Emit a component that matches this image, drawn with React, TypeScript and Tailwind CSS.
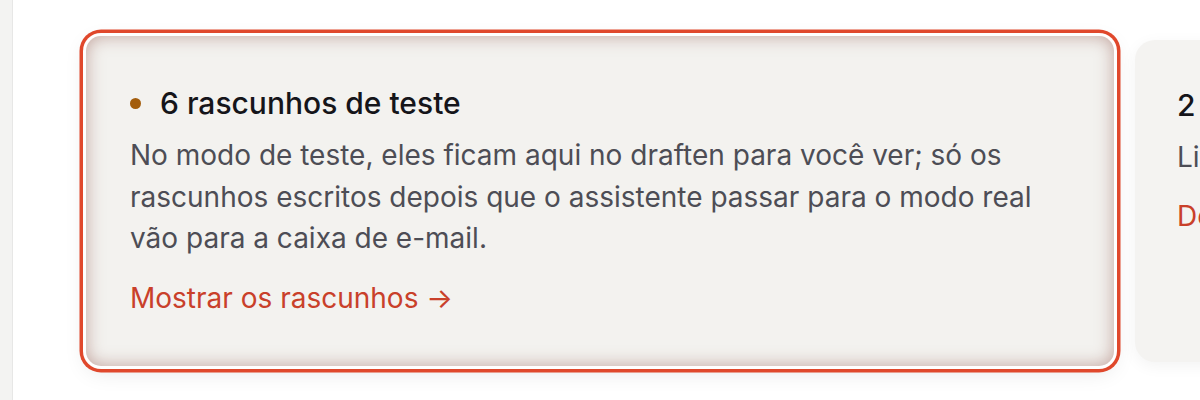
import React from "react";

export default function App() {
  return (
    <div className="flex h-[400px] w-[1200px] overflow-hidden bg-white" style={{ fontFamily: "Inter, 'Noto Sans', sans-serif" }}>
      <aside className="h-full w-[13px] shrink-0 border-r border-[#e7e7e6] bg-[#f3f3f2]" />
      <main className="flex flex-1 items-start gap-[21px] overflow-hidden pl-[73px] pt-[36px]">
        <section className="h-[330px] w-[1028px] shrink-0 rounded-[15px] bg-[#f3f2ef] pl-[44px] pr-[40px] pt-[49px] ring-[3.5px] ring-[#e0482c] ring-offset-[3px] ring-offset-white shadow-[0_6px_22px_rgba(0,0,0,0.10)] inset-shadow-[0_0_17px_rgba(145,85,75,0.5)]">
          <div className="flex items-center gap-[19px]">
            <span className="h-[11px] w-[11px] shrink-0 rounded-full bg-[#a35d0c]" />
            <h2 className="text-[30px] font-medium leading-[36px] text-[#15151a]">6 rascunhos de teste</h2>
          </div>
          <p className="mt-[14px] text-[28px] leading-[41.5px] text-[#4d4d55]">
            No modo de teste, eles ficam aqui no draften para você ver; só os rascunhos escritos depois que o assistente passar para o modo real vão para a caixa de e-mail.
          </p>
          <a className="mt-[18px] block text-[28px] leading-[40px] text-[#c9402a]">Mostrar os rascunhos →</a>
        </section>
        <section className="mt-[4px] h-[322px] w-[500px] shrink-0 rounded-[20px] bg-[#f4f3f1] pl-[42px] pt-[47px] shadow-[0_4px_16px_rgba(0,0,0,0.05)]">
          <h2 className="text-[30px] font-medium leading-[36px] text-[#15151a]">2 rascunhos</h2>
          <p className="mt-[14px] text-[28px] leading-[41.5px] text-[#4d4d55]">Limites</p>
          <a className="mt-[17px] block text-[28px] leading-[40px] text-[#c9402a]">Detalhes →</a>
        </section>
      </main>
    </div>
  );
}
